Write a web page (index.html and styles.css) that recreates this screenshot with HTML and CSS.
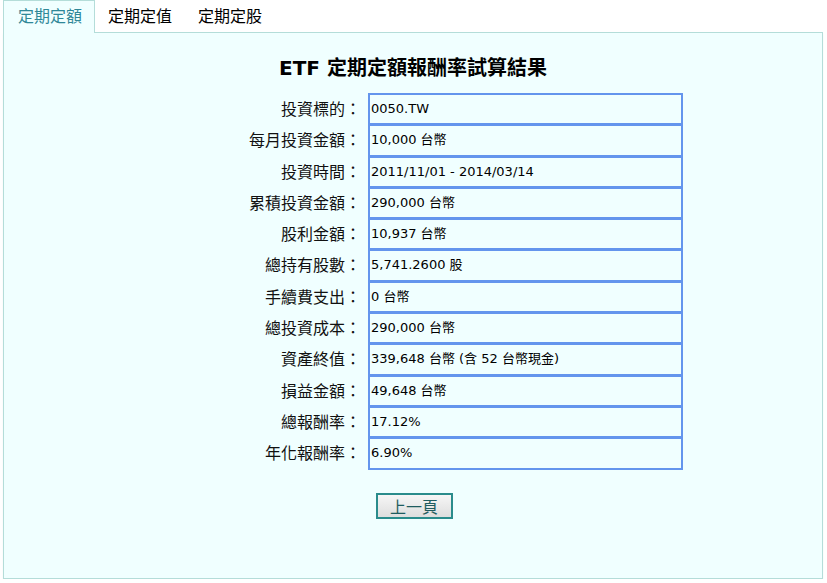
FILE: index.html
```html
<!DOCTYPE html>
<html lang="zh-Hant">
<head>
    <meta charset="UTF-8">
    <title>ETF 定期定額報酬率試算結果</title>
    <link rel="stylesheet" href="styles.css">
</head>
<body>
    <div class="page">
        <ul class="tabs">
            <li class="tab active">定期定額</li>
            <li class="tab">定期定值</li>
            <li class="tab">定期定股</li>
        </ul>

        <div class="panel">
            <h2 class="title">ETF 定期定額報酬率試算結果</h2>

            <div class="result">
                <div class="label">投資標的：</div>
                <div class="value">0050.TW</div>

                <div class="label">每月投資金額：</div>
                <div class="value">10,000 台幣</div>

                <div class="label">投資時間：</div>
                <div class="value">2011/11/01 - 2014/03/14</div>

                <div class="label">累積投資金額：</div>
                <div class="value">290,000 台幣</div>

                <div class="label">股利金額：</div>
                <div class="value">10,937 台幣</div>

                <div class="label">總持有股數：</div>
                <div class="value">5,741.2600 股</div>

                <div class="label">手續費支出：</div>
                <div class="value">0 台幣</div>

                <div class="label">總投資成本：</div>
                <div class="value">290,000 台幣</div>

                <div class="label">資產終值：</div>
                <div class="value">339,648 台幣 (含 52 台幣現金)</div>

                <div class="label">損益金額：</div>
                <div class="value">49,648 台幣</div>

                <div class="label">總報酬率：</div>
                <div class="value">17.12%</div>

                <div class="label">年化報酬率：</div>
                <div class="value">6.90%</div>
            </div>

            <div class="actions">
                <button class="back-button">上一頁</button>
            </div>
        </div>
    </div>
</body>
</html>
```

FILE: styles.css
```css
* {
    margin: 0;
    padding: 0;
    box-sizing: border-box;
}

body {
    background: #ffffff;
    font-family: "Noto Sans CJK TC", sans-serif;
    color: #111;
}

.page {
    margin: 0 4px 0 3px;
}

/* Tabs */
.tabs {
    display: flex;
    list-style: none;
    height: 32px;
}

.tab {
    padding: 0 12px 0 12px;
    height: 32px;
    line-height: 28px;
    font-size: 16px;
    color: #000;
    border: 1px solid transparent;
    border-bottom: none;
}

.tab:first-child {
    padding-left: 14px;
}

.tab.active {
    background: #f0ffff;
    border-color: #b4ddd9;
    color: #2f8898;
    height: 33px;
    position: relative;
    z-index: 1;
}

/* Panel */
.panel {
    background: #f0ffff;
    border: 1px solid #b4ddd9;
    height: 547px;
    padding-top: 22px;
    box-shadow: 0 2px 2px rgba(0, 0, 0, 0.04);
}

.title {
    text-align: center;
    font-family: "DejaVu Sans", "Noto Sans CJK TC", sans-serif;
    font-size: 20px;
    font-weight: bold;
    line-height: 26px;
    color: #000;
    margin-bottom: 12px;
}

/* Result table */
.result {
    display: grid;
    grid-template-columns: 362px 315px;
    column-gap: 2px;
}

.label {
    text-align: right;
    padding-right: 5px;
    font-size: 16px;
    line-height: 30px;
    height: 32.3px;
    margin-top: -1px;
    color: #111;
}

.value {
    height: 32.3px;
    margin-top: -1px;
    border: 2px solid #6495ed;
    padding-left: 1px;
    font-family: "DejaVu Sans", "Noto Sans CJK TC", sans-serif;
    font-size: 13px;
    line-height: 28px;
    color: #000;
}

.label:first-child,
.value:nth-child(2) {
    margin-top: 0;
}

/* Back button */
.actions {
    display: flex;
    justify-content: center;
    padding-top: 23px;
}

.back-button {
    width: 77px;
    height: 26px;
    margin-left: 2px;
    border: 2px solid #2a8c8c;
    background: linear-gradient(#f6f6f6, #dedede);
    font-family: "Noto Sans CJK TC", sans-serif;
    font-size: 16px;
    line-height: 20px;
    color: #1f5c60;
}
```
